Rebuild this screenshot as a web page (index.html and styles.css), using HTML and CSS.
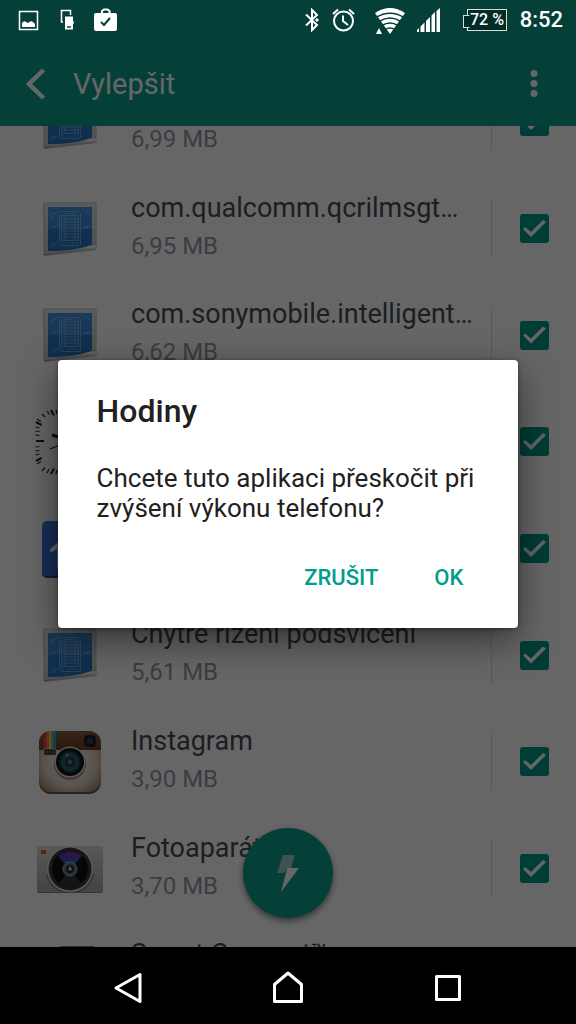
FILE: index.html
```html
<!DOCTYPE html>
<html lang="cs">
<head>
<meta charset="utf-8">
<meta name="viewport" content="width=device-width, initial-scale=1">
<title>Vylepšit</title>
<link rel="stylesheet" href="styles.css">
</head>
<body>
<svg class="sprites" aria-hidden="true">
  <defs>
    <linearGradient id="paper" x1="0" y1="0" x2="0" y2="1">
      <stop offset="0" stop-color="#e6e6e6"/><stop offset="1" stop-color="#c4c4c4"/>
    </linearGradient>
    <linearGradient id="curl" x1="0.45" y1="0" x2="0.55" y2="1">
      <stop offset="0" stop-color="#999"/><stop offset=".3" stop-color="#f8f8f8"/><stop offset=".6" stop-color="#c4c4c4"/><stop offset="1" stop-color="#777"/>
    </linearGradient>
    <linearGradient id="blue" x1="0" y1="0" x2="0" y2="1">
      <stop offset="0" stop-color="#4092dc"/><stop offset="1" stop-color="#2f80d0"/>
    </linearGradient>
    <linearGradient id="leather" x1="0" y1="0" x2="0" y2="1">
      <stop offset="0" stop-color="#8a5a40"/><stop offset="1" stop-color="#6c3c28"/>
    </linearGradient>
    <radialGradient id="cream" cx=".5" cy=".5" r=".7">
      <stop offset="0" stop-color="#fffaf0"/><stop offset=".6" stop-color="#dccfc0"/><stop offset="1" stop-color="#8a6c54"/>
    </radialGradient>
    <radialGradient id="glass">
      <stop offset="0" stop-color="#9ab"/><stop offset=".25" stop-color="#263238"/><stop offset=".6" stop-color="#2a6970"/><stop offset="1" stop-color="#080808"/>
    </radialGradient>
    <linearGradient id="silver" x1="0" y1="0" x2="0" y2="1">
      <stop offset="0" stop-color="#dcdcdc"/><stop offset="1" stop-color="#aaa"/>
    </linearGradient>
    <linearGradient id="flare" x1="0" y1="0" x2="0" y2="1">
      <stop offset="0" stop-color="#8c2aa4"/><stop offset=".5" stop-color="#3350d0"/><stop offset="1" stop-color="#50b0e0"/>
    </linearGradient>
    <symbol id="blueprint" viewBox="0 0 72 72">
      <path d="M9.500 10.500h52.500v46.500l-52 6z" fill="#b0b0b0"/>
      <path d="M10 10h52v46l-52 6z" fill="url(#paper)" stroke="#c0c0c0"/>
      <path d="M14 14h44v38q-18 6-44 6z" fill="url(#blue)"/>
      <path d="M14 36h44v16q-18 6-44 6z" fill="#1c68b4" opacity=".5"/>
      <path d="M10 61q30-2 52-10.500V56q-24 2-52 6z" fill="url(#curl)"/>
      <g fill="none" stroke="#b4d6f4" stroke-width=".8" opacity=".6">
        <rect x="25.500" y="18.500" width="21" height="34" rx="2"/>
        <rect x="27.500" y="22.500" width="17" height="25"/>
        <path d="M31 20.500h9M28 26h16M28 29h16M28 32h16M28 35h16M28 38h16M28 41h16M28 44h16M31 23v24M41 23v24M28 50h2M34 50h2M38 50h2M42 50h2"/>
        <path d="M16 23l3-3 1 1 5-4M16 25l4-2M17 36l3-3 2 1 3-3M48 16l4 3 1-1 3 3M50 33l3 1 2-2 3 3M47 36l5-2 3 1M16 55l2-4 3-1M19 54l4-4"/>
      </g>
    </symbol>
    <symbol id="clockface" viewBox="0 0 72 72">
      <g stroke="#222" stroke-width="1.200">
        <path d="M8 8l3 3M13 5l2.500 3.500M3 13l4 2.500M1.500 21l4 1M1.500 25l4 .5M1.500 29l4 .5M1.500 41l4-.5M1.500 45l4-.5M1.500 49l4-1M3 58l4-2.500M8 65l3-3.500M13 67l2-4M22 68l1-4M22 4l1 4"/>
        <path d="M2 16l5.500 3M2 35h8M2 55l5.500-3M17 4l3 5.500M17 68l3-5.500" stroke-width="2"/>
        <path d="M18 29l13 4" stroke-width="3"/><path d="M16 43l20-8"/>
      </g>
    </symbol>
    <symbol id="launcher" viewBox="0 0 72 72">
      <rect x="8" y="9" width="56" height="56" rx="5" fill="#1d4a94"/>
      <rect x="8" y="8" width="56" height="55" rx="5" fill="#3978dc"/>
      <path d="M18 37l18-15 18 15M25 34v20h22V34" fill="none" stroke="#fff" stroke-width="4" stroke-linecap="round"/>
    </symbol>
    <symbol id="instagram" viewBox="0 0 72 72">
      <rect x="5" y="6" width="62" height="62" rx="12" fill="#685040"/>
      <rect x="5" y="5" width="62" height="61" rx="12" fill="url(#cream)"/>
      <path d="M5 24v-7A12 12 0 0 1 17 5h38a12 12 0 0 1 12 12v7z" fill="url(#leather)"/>
      <path d="M9 8l3-2v18H9z" fill="#d03a48"/><path d="M12 6l3-1v19h-3z" fill="#f07838"/>
      <path d="M15 5h2v19h-2z" fill="#f2d345"/><path d="M17 5h2v19h-2z" fill="#78bc4d"/><path d="M19 5h3v19h-3z" fill="#3e96dd"/>
      <rect x="10" y="23" width="12" height="6" rx="1" fill="#302a28" stroke="#bbb" stroke-width=".7"/>
      <path d="M12 26h8" stroke="#aaa" stroke-dasharray="2 1"/>
      <rect x="50" y="9" width="12" height="12" rx="3" fill="#161818" stroke="#5a3a2a"/>
      <circle cx="56" cy="15" r="3.500" fill="#263a58"/>
      <circle cx="36" cy="38" r="16" fill="#a18c7a"/><circle cx="36" cy="36" r="15.500" fill="#e0ddd8"/>
      <circle cx="36" cy="36" r="14" fill="#141516"/><circle cx="36" cy="36" r="12.500" fill="url(#glass)"/>
      <circle cx="36" cy="36" r="6" fill="none" stroke="#42565d"/><circle cx="33" cy="29" r="1.500" fill="#83a4aa"/>
    </symbol>
    <symbol id="camera" viewBox="0 0 72 72">
      <rect x="3" y="14" width="66" height="46" rx="2" fill="#888"/>
      <rect x="3" y="13" width="66" height="46" rx="2" fill="url(#silver)"/>
      <rect x="7" y="17" width="5" height="4" rx="1" fill="#e85020"/>
      <path d="M12 41a24 24 0 0 0 14 18h20a24 24 0 0 0 14-18z" fill="#888"/>
      <circle cx="36" cy="36" r="23" fill="#e5e5e5"/><circle cx="36" cy="36" r="21.500" fill="#3b3b3b"/>
      <circle cx="36" cy="36" r="18" fill="#111"/>
      <path d="M36 36L24 23a18 18 0 0 1 24 0z" fill="url(#flare)"/>
      <path d="M36 36l-11 14a18 18 0 0 0 22 0z" fill="#363636"/>
      <circle cx="36" cy="36" r="7" fill="#5f7885" stroke="#99adb5"/><circle cx="36" cy="36" r="4" fill="#242a2e"/>
      <path d="M36 33v5M34 36h4" stroke="#fff"/>
    </symbol>
    <symbol id="connect" viewBox="0 0 72 72">
      <rect x="25" y="7" width="36" height="50" rx="2" fill="#4387b0"/>
    </symbol>
  </defs>
</svg>

<div class="screen">
  <header class="top">
    <div class="status">
      <div class="status-left">
        <svg width="22" height="26" viewBox="0 0 22 26" fill="none" stroke="#fff"><path d="M1.500 4.500h18v18h-18z" stroke-width="1.500"/><path d="M4 20v-4q2-3 4-1l2 1q3-3 5-1l2 2v3z" fill="#fff" stroke="none"/></svg>
        <svg width="14" height="26" viewBox="0 0 14 26" fill="none" stroke="#fff"><path d="M3 15H1.500V3.500h9V8" stroke-width="1.500"/><path d="M5 9.500h8V14l1 1v1l-1 1v5.500H5z" fill="#fff" stroke="none"/><path d="M7 20h4" stroke="#044038" stroke-width="1.500"/></svg>
        <svg width="24" height="26" viewBox="0 0 24 26"><path d="M8 6.500V4l2-1.500h3.500L15.500 4v2.500" fill="none" stroke="#fff" stroke-width="2"/><rect y="6" width="23" height="18" rx="2" fill="#fff"/><path d="M7 15l3 3 6-7" fill="none" stroke="#044038" stroke-width="2"/></svg>
      </div>
      <div class="status-right">
        <svg width="16" height="26" viewBox="0 0 16 26" fill="none" stroke="#fff" stroke-width="2"><path d="M1 7.500l11 10.500-5 5V3l5 5L1 18.500"/><path d="M10 13l2-2 2 2-2 2z" fill="#fff" stroke="none"/></svg>
        <svg width="26" height="26" viewBox="0 0 26 26" fill="none" stroke="#fff" stroke-width="2"><circle cx="12.500" cy="14" r="9.500"/><path d="M12 8.500V14l5 4M2 7l5-4.500M18 2.500l5 4.500"/></svg>
        <svg width="40" height="28" viewBox="0 0 40 28" fill="none" stroke="#fff"><path d="M8 7q15-10 30 0L23 28z" fill="#fff" stroke="none"/><path d="M9 11.500q14-8.500 28 0M12 15.500q11-7 22 0M15 19.500q8-5 16 0M18 23.500q5-3 10 0" stroke="#044038" stroke-width="1.500"/><path d="M9 28l3-6 3 6z" fill="#fff" stroke="none"/></svg>
        <svg width="36" height="26" viewBox="0 0 36 26" fill="#fff"><path d="M-2 25l4-4v4zM3.500 19.500l4-4V25h-4zM9 14l4-4v15H9zM14.500 8.500l3.500-3.500v20h-3.500zM19.500 4L23 1v24h-3.500z"/></svg>
        <div class="battery">72 %</div>
        <time class="clock">8:52</time>
      </div>
    </div>
    <div class="appbar">
      <button class="icon-button" aria-label="Zpět"><svg width="20" height="32" viewBox="0 0 20 32"><path d="M17.500 2L3 16l14.500 14" fill="none" stroke="#fff" stroke-width="4.500"/></svg></button>
      <h1 class="title">Vylepšit</h1>
      <button class="icon-button" aria-label="Další možnosti"><svg width="10" height="32" viewBox="0 0 10 32" fill="#fff"><circle cx="5" cy="5.500" r="3.500"/><circle cx="5" cy="15.500" r="3.500"/><circle cx="5" cy="25.500" r="3.500"/></svg></button>
    </div>
  </header>

  <main class="content">
    <ul class="apps">
      <li class="app"><svg class="app-icon"><use href="#blueprint"/></svg><label class="app-text" for="a1"><span class="name">&nbsp;</span><span class="size">6,99 MB</span></label><span class="pick"><input class="check" id="a1" type="checkbox" checked></span></li>
      <li class="app"><svg class="app-icon"><use href="#blueprint"/></svg><label class="app-text" for="a2"><span class="name">com.qualcomm.qcrilmsgt…</span><span class="size">6,95 MB</span></label><span class="pick"><input class="check" id="a2" type="checkbox" checked></span></li>
      <li class="app"><svg class="app-icon"><use href="#blueprint"/></svg><label class="app-text" for="a3"><span class="name">com.sonymobile.intelligent…</span><span class="size">6,62 MB</span></label><span class="pick"><input class="check" id="a3" type="checkbox" checked></span></li>
      <li class="app"><svg class="app-icon"><use href="#clockface"/></svg><label class="app-text" for="a4"></label><span class="pick"><input class="check" id="a4" type="checkbox" checked aria-label="Hodiny"></span></li>
      <li class="app"><svg class="app-icon"><use href="#launcher"/></svg><label class="app-text" for="a5"></label><span class="pick"><input class="check" id="a5" type="checkbox" checked aria-label="Aplikace"></span></li>
      <li class="app"><svg class="app-icon"><use href="#blueprint"/></svg><label class="app-text" for="a6"><span class="name">Chytré řízení podsvícení</span><span class="size">5,61 MB</span></label><span class="pick"><input class="check" id="a6" type="checkbox" checked></span></li>
      <li class="app"><svg class="app-icon"><use href="#instagram"/></svg><label class="app-text" for="a7"><span class="name">Instagram</span><span class="size">3,90 MB</span></label><span class="pick"><input class="check" id="a7" type="checkbox" checked></span></li>
      <li class="app"><svg class="app-icon"><use href="#camera"/></svg><label class="app-text" for="a8"><span class="name">Fotoaparát</span><span class="size">3,70 MB</span></label><span class="pick"><input class="check" id="a8" type="checkbox" checked></span></li>
      <li class="app"><svg class="app-icon"><use href="#connect"/></svg><label class="app-text" for="a9"><span class="name">Smart Connect™</span><span class="size">&nbsp;</span></label><span class="pick"><input class="check" id="a9" type="checkbox" checked></span></li>
    </ul>
    <button class="boost" aria-label="Zvýšit výkon"><svg width="24" height="38" viewBox="0 0 24 38"><path d="M7 1h12l-4 13h-4l-3 5H1z" fill="#9dccc5"/><path d="M11 14h12L5 38l5-19z" fill="#fff"/></svg></button>
  </main>

  <nav class="navbar">
    <button class="nav-button" aria-label="Zpět"><svg width="34" height="34" viewBox="0 0 34 34"><path d="M5 17L29 3.500v27z"/></svg></button>
    <button class="nav-button" aria-label="Domů"><svg width="34" height="34" viewBox="0 0 34 34"><path d="M3.500 30.500v-17L17 2l13.500 11.500v17z"/></svg></button>
    <button class="nav-button" aria-label="Přehled"><svg width="34" height="34" viewBox="0 0 34 34"><path d="M5.500 5.500h23v23h-23z"/></svg></button>
  </nav>

  <div class="scrim">
    <section class="dialog" role="dialog" aria-modal="true" aria-labelledby="dialog-title">
      <h2 class="dialog-title" id="dialog-title">Hodiny</h2>
      <p class="dialog-text">Chcete tuto aplikaci přeskočit při zvýšení výkonu telefonu?</p>
      <div class="actions"><button class="action">ZRUŠIT</button><button class="action">OK</button></div>
    </section>
  </div>
</div>
</body>
</html>
```
FILE: styles.css
```css
* { box-sizing: border-box; }

body {
  margin: 0;
  font-family: Roboto, "Noto Sans", sans-serif;
  background: #fff;
}

button {
  margin: 0;
  padding: 0;
  border: 0;
  background: none;
  font: inherit;
  color: inherit;
}

svg { display: block; }

.sprites { position: absolute; width: 0; height: 0; }

.screen {
  position: relative;
  display: flex;
  flex-direction: column;
  height: 100vh;
  overflow: hidden;
}

/* Header */
.top { background: #0aa08c; color: #fff; }

.status {
  position: relative;
  z-index: 3;
  display: flex;
  justify-content: space-between;
  height: 40px;
  padding: 0 13px 0 18px;
}

.status-left { display: flex; align-items: center; gap: 20px; }
.status-right { display: flex; align-items: center; gap: 10px; }

.battery {
  position: relative;
  width: 40px;
  height: 22px;
  margin-left: 4px;
  border: 1px solid #d5dedc;
  background: #032c26;
  font-size: 16px;
  font-weight: 500;
  line-height: 20px;
  text-align: center;
}

.battery::before {
  content: "";
  position: absolute;
  left: -5px;
  top: 5px;
  width: 5px;
  height: 11px;
  border: 1px solid #d5dedc;
  border-right-color: #032c26;
  background: #032c26;
}

.clock {
  min-width: 46px;
  font-size: 22px;
  font-weight: 500;
  line-height: 42px;
  text-align: right;
}

.appbar {
  display: flex;
  align-items: center;
  height: 86px;
  padding: 2px 37px 0 26px;
}

.title {
  flex: 1;
  margin: 0 0 0 27px;
  font-size: 29px;
  font-weight: 400;
  line-height: 36px;
}

/* App list */
.content { position: relative; flex: 1; min-height: 0; overflow: hidden; }

.apps {
  display: grid;
  grid-template-columns: minmax(0, 1fr);
  grid-auto-rows: 107px 107px 106px;
  margin: -58px 0 0;
  padding: 0 27px 0 34px;
  list-style: none;
}

.app { display: flex; align-items: center; }

.app-icon { flex: none; width: 72px; height: 72px; }

.app-text {
  flex: 1;
  min-width: 0;
  display: flex;
  flex-direction: column;
  gap: 4px;
  padding: 0 0 6px 25px;
  white-space: nowrap;
}

.name { color: #464c56; font-size: 27px; line-height: 36px; }
.size { color: #9298a8; font-size: 24px; line-height: 32px; }

.pick {
  display: flex;
  align-items: center;
  height: 58px;
  padding-left: 28px;
  border-left: 1px solid #dedede;
}

.check {
  appearance: none;
  width: 29px;
  height: 29px;
  margin: 0;
  border-radius: 3px;
  background: #009887;
}

.check:checked::before {
  content: "";
  display: block;
  width: 29px;
  height: 29px;
  background: #fff;
  clip-path: polygon(3px 15px, 5px 13px, 11px 18px, 23px 6px, 26px 8px, 11px 23px);
}

.boost {
  position: absolute;
  left: 50%;
  bottom: 29px;
  display: grid;
  place-items: center;
  width: 90px;
  height: 90px;
  margin-left: -45px;
  border-radius: 50%;
  background: #0aa08c;
  box-shadow: 0 3px 6px rgba(0, 0, 0, .5);
}

/* System navigation */
.navbar {
  position: relative;
  z-index: 3;
  display: flex;
  justify-content: center;
  gap: 80px;
  height: 77px;
  padding-top: 5px;
  background: #000;
}

.nav-button { display: grid; place-items: center; width: 80px; }

.nav-button path {
  fill: none;
  stroke: #fff;
  stroke-width: 3;
  stroke-linejoin: round;
}

/* Dialog */
.scrim {
  position: absolute;
  inset: 0;
  z-index: 2;
  display: flex;
  align-items: center;
  justify-content: center;
  padding: 40px 0 77px;
  background: rgba(0, 0, 0, .6);
}

.dialog {
  width: 80%;
  padding: 31px 39px 28px;
  border-radius: 4px;
  background: #fff;
  color: #212121;
  box-shadow: 0 12px 36px rgba(0, 0, 0, .5), 0 1px 4px rgba(0, 0, 0, .4);
}

.dialog-title { margin: 0; font-size: 32px; font-weight: 500; line-height: 40px; }
.dialog-text { margin: 32px 0 0; font-size: 26px; line-height: 30px; }

.actions {
  display: flex;
  justify-content: flex-end;
  gap: 56px;
  margin-top: 33px;
  padding-right: 16px;
}

.action { color: #009d8c; font-size: 22px; font-weight: 500; line-height: 44px; }
```
